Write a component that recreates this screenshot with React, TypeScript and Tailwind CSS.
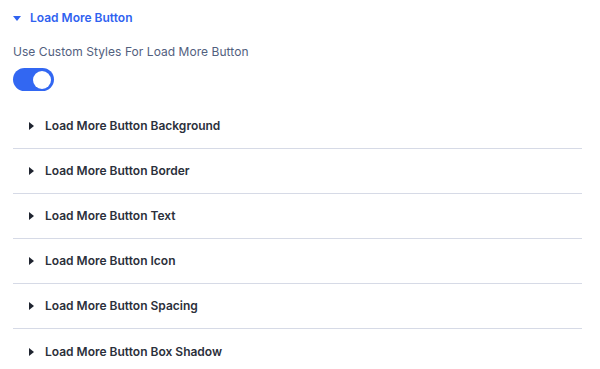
const ROWS = [
  "Load More Button Background",
  "Load More Button Border",
  "Load More Button Text",
  "Load More Button Icon",
  "Load More Button Spacing",
  "Load More Button Box Shadow",
];

function CaretDown() {
  return (
    <svg width="8" height="5" viewBox="0 0 8 5" className="shrink-0">
      <path d="M0 0 L8 0 L4 5 Z" fill="#2f62f0" />
    </svg>
  );
}

function CaretRight() {
  return (
    <svg width="5" height="8" viewBox="0 0 5 8" className="shrink-0">
      <path d="M0 0 L5 4 L0 8 Z" fill="#1f2430" />
    </svg>
  );
}

export default function App() {
  return (
    <div className="w-[600px] h-[369px] bg-white font-['Inter','Liberation_Sans',sans-serif] overflow-hidden">
      {/* Section header */}
      <div className="flex items-center gap-[9px] pl-[13px] pt-[8px] h-[28px]">
        <CaretDown />
        <span className="text-[12px] font-semibold text-[#2f62f0] leading-none">Load More Button</span>
      </div>

      <div className="pl-[13px] pt-[16px]">
        <div className="text-[12px] text-[#52607e] tracking-[0.05px] leading-[16px]">Use Custom Styles For Load More Button</div>
        <div className="mt-[8px] w-[41px] h-[23px] rounded-full bg-[#3267f2] flex items-center justify-end pr-[3px]">
          <div className="w-[18px] h-[18px] rounded-full bg-white" />
        </div>
      </div>

      {/* Collapsed groups */}
      <div className="ml-[13px] mr-[18px] mt-[13px]">
        {ROWS.map((label, i) => (
          <div
            key={label}
            className={`flex items-center gap-[11px] pl-[16px] h-[45px] ${
              i < ROWS.length - 1 ? "border-b border-[#d6dae6]" : ""
            }`}
          >
            <CaretRight />
            <span className="text-[12px] font-semibold text-[#2b303b]">{label}</span>
          </div>
        ))}
      </div>
    </div>
  );
}
